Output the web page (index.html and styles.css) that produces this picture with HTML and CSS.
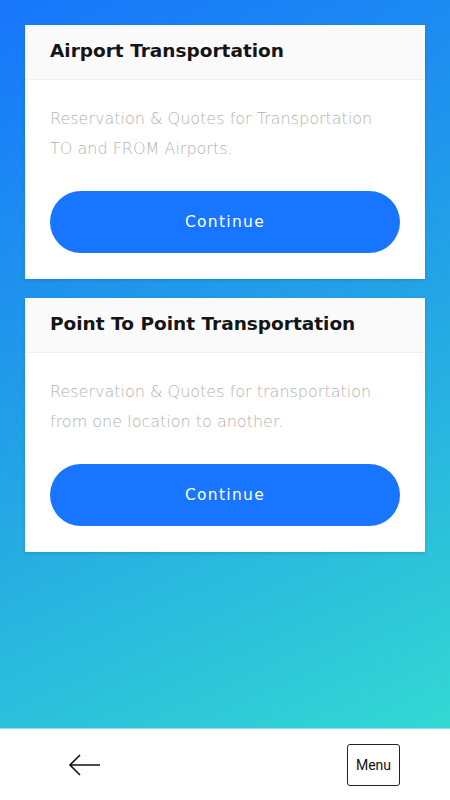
FILE: index.html
```html
<!DOCTYPE html>
<html lang="en">
<head>
    <meta charset="UTF-8">
    <meta name="viewport" content="width=device-width, initial-scale=1.0">
    <link rel="stylesheet" href="styles.css">
</head>
<body>
    <!-- Services list -->
    <div class="content">
        <div class="card">
            <div class="card-header">Airport Transportation</div>
            <div class="card-body">
                <p class="card-text">Reservation &amp; Quotes for Transportation TO and FROM Airports.</p>
                <button class="continue-btn">Continue</button>
            </div>
        </div>

        <div class="card">
            <div class="card-header">Point To Point Transportation</div>
            <div class="card-body">
                <p class="card-text">Reservation &amp; Quotes for transportation from one location to another.</p>
                <button class="continue-btn">Continue</button>
            </div>
        </div>
    </div>

    <!-- Bottom navigation -->
    <div class="bottom-bar">
        <button class="back-btn" aria-label="Back">
            <svg width="34" height="26" viewBox="0 0 34 26">
                <path d="M32 13H2M12 3L2 13l10 10" fill="none" stroke="#111" stroke-width="1.6"/>
            </svg>
        </button>
        <button class="menu-btn">Menu</button>
    </div>
</body>
</html>
```

FILE: styles.css
```css
html, body {
    margin: 0;
    height: 100%;
}

body {
    display: flex;
    flex-direction: column;
    font-family: 'DejaVu Sans', sans-serif;
}

/* Gradient area with cards */
.content {
    flex: 1;
    display: flex;
    flex-direction: column;
    gap: 19px;
    padding: 25px;
    background: linear-gradient(155deg, #1776fc 0%, #23a2e6 50%, #33d8d3 100%);
    border-bottom: 1px solid #7fe6ef;
}

.card {
    background-color: #fff;
    box-shadow: 0 1px 3px rgba(0, 0, 0, 0.15);
}

.card-header {
    background-color: #fafafa;
    border-bottom: 1px solid #efefef;
    padding: 14px 25px 16px;
    line-height: 24px;
    font-size: 18.5px;
    font-weight: bold;
    color: #151515;
}

.card-body {
    padding: 24px 25px 26px;
}

.card-text {
    margin: 0 0 27px;
    padding-right: 10px;
    font-size: 16px;
    line-height: 30px;
    font-weight: 200;
    color: #b2b2b2;
}

.continue-btn {
    display: block;
    width: 100%;
    height: 62px;
    border: none;
    border-radius: 31px;
    background-color: #1775ff;
    color: #fff;
    font-family: inherit;
    font-size: 15.5px;
    letter-spacing: 1.3px;
}

/* Bottom navigation */
.bottom-bar {
    height: 71px;
    flex-shrink: 0;
    display: flex;
    align-items: center;
    justify-content: space-between;
    padding: 0 50px 0 68px;
    background-color: #fff;
}

.back-btn {
    border: none;
    background: none;
    padding: 0;
    display: flex;
}

.menu-btn {
    width: 53px;
    height: 42px;
    padding: 0;
    border: 1.3px solid #222;
    border-radius: 3px;
    background: #fff;
    font-family: Roboto, sans-serif;
    font-size: 14px;
    color: #111;
}
```
